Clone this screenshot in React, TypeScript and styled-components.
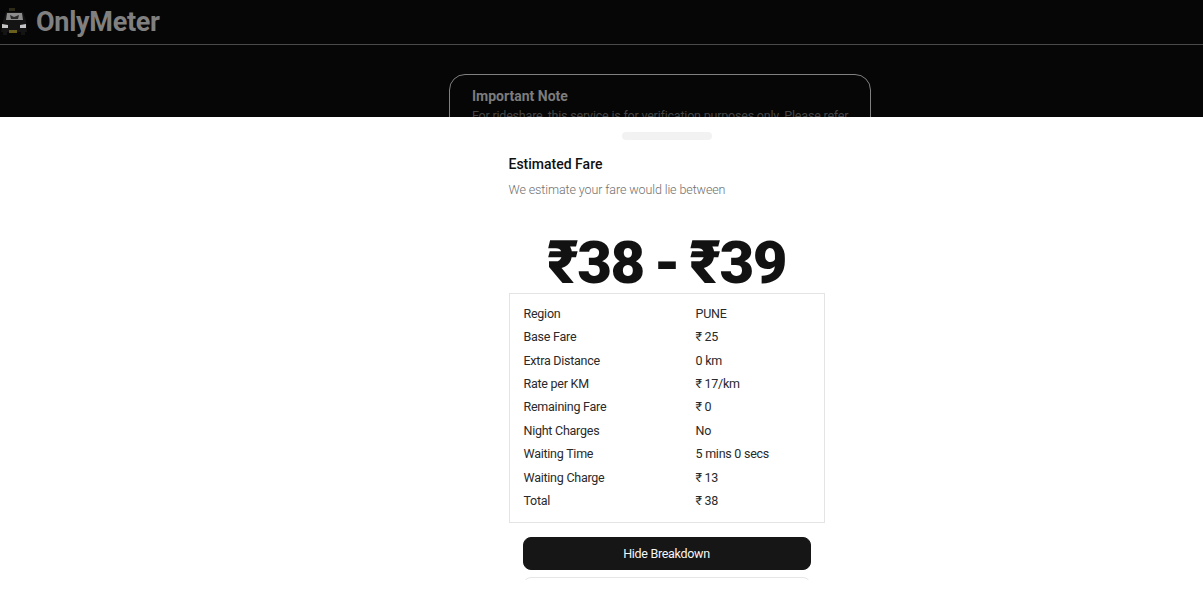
import React from 'react'
import styled, {createGlobalStyle} from 'styled-components'

const GlobalStyle = createGlobalStyle`
  html, body {
    margin: 0;
    padding: 0;
    height: 100%;
    background: #060606;
    overflow: hidden;
    font-family: "Roboto", "Noto Sans", "DejaVu Sans", sans-serif;
  }
`

const Page = styled.div`
  height: 611px;
  background: #060606;
  position: relative;
  overflow: hidden;
`

const Header = styled.header`
  height: 45px;
  box-sizing: border-box;
  border-bottom: 1px solid #4a4a4a;
  display: flex;
  align-items: center;
  gap: 8px;
`

const Brand = styled.div`
  font-size: 27px;
  font-weight: 700;
  color: #808080;
  letter-spacing: -0.3px;
`

const NoteCard = styled.section`
  width: 422px;
  box-sizing: border-box;
  margin: 29px 0 0 449px;
  padding: 12px 22px;
  border: 1px solid #808080;
  border-radius: 16px;
  height: 120px;
`

const NoteTitle = styled.div`
  font-size: 14px;
  font-weight: 700;
  color: #7c7c7c;
  line-height: 18px;
`

const NoteText = styled.div`
  font-size: 12.5px;
  letter-spacing: -0.2px;
  color: #454545;
  line-height: 20px;
  margin-top: 1px;
  white-space: nowrap;
`

const Sheet = styled.div`
  position: absolute;
  top: 117px;
  left: 0;
  right: 0;
  bottom: 0;
  background: #fff;
  padding-left: 130px;
  display: flex;
  flex-direction: column;
  align-items: center;
`

const Handle = styled.div`
  width: 90px;
  height: 8px;
  margin-top: 15px;
  border-radius: 4px;
  background: #f2f2f2;
  flex: none;
`

const Body = styled.div`
  width: 316px;
  display: flex;
  flex-direction: column;
  flex: none;
`

const Title = styled.h2`
  margin: 14px 0 0;
  font-size: 14px;
  line-height: 20px;
  font-weight: 500;
  color: #111;
`

const Subtitle = styled.p`
  margin: 6px 0 0;
  font-size: 12.5px;
  letter-spacing: -0.1px;
  line-height: 20px;
  font-weight: 300;
  color: #6f6f6f;
`

const FareRange = styled.div`
  margin-top: 23px;
  height: 70px;
  font-size: 60px;
  line-height: 80px;
  font-weight: 900;
  letter-spacing: -1.5px;
  word-spacing: -3.5px;
  color: #121212;
  text-align: center;
  white-space: nowrap;
`

const Breakdown = styled.div`
  box-sizing: border-box;
  height: 230px;
  border: 1px solid #e4e4e4;
  padding: 7.6px 14px 0;
  display: flex;
  flex-direction: column;
`

const Row = styled.div`
  height: 23.4px;
  display: grid;
  grid-template-columns: 172px 1fr;
  align-items: center;
  font-size: 12.5px;
  letter-spacing: -0.25px;
  color: #2a2a2a;
`

const Actions = styled.div`
  width: 288px;
  align-self: center;
  margin-top: 14px;
  display: flex;
  flex-direction: column;
  gap: 7px;
`

const Button = styled.button<{$primary?: boolean}>`
  width: 100%;
  height: 33px;
  flex: none;
  border-radius: 8px;
  border: 1px solid ${p => (p.$primary ? '#161616' : '#e6e6e6')};
  background: ${p => (p.$primary ? '#161616' : '#fff')};
  color: ${p => (p.$primary ? '#f5f5f5' : '#161616')};
  font-family: inherit;
  font-size: 12.5px;
  letter-spacing: -0.3px;
`

const BottomMask = styled.div`
  position: absolute;
  left: 0;
  right: 0;
  top: 580px;
  bottom: 0;
  background: #fff;
`

const CarLogo = () => (
  <svg width="28" height="40" viewBox="0 2 28 40">
    <rect x="9" y="8" width="6" height="3" fill="#2e2a18" />
    <path d="M3 21 L6 12 H23 L26 21 L27 32 H1 Z" fill="#141414" />
    <path d="M7 13 H22 L23 20 H6 Z" fill="#8d8d8d" />
    <path d="M10 15 L14 17 L19 15 L18 19 H11 Z" fill="#2a2a2a" />
    <path d="M2 24 L8 25 V28 H2 Z" fill="#c4c4c4" />
    <path d="M26 24 L20 25 V28 H26 Z" fill="#c4c4c4" />
    <rect x="9" y="30" width="8" height="3" fill="#6b5f1e" />
    <rect x="3" y="32" width="4" height="3" fill="#141414" />
    <rect x="21" y="32" width="4" height="3" fill="#141414" />
  </svg>
)

const rows = [
  ['Region', 'PUNE'],
  ['Base Fare', '₹ 25'],
  ['Extra Distance', '0 km'],
  ['Rate per KM', '₹ 17/km'],
  ['Remaining Fare', '₹ 0'],
  ['Night Charges', 'No'],
  ['Waiting Time', '5 mins 0 secs'],
  ['Waiting Charge', '₹ 13'],
  ['Total', '₹ 38'],
]

const App: React.FC = () => {
  return (
    <Page>
      <GlobalStyle />
      <Header>
        <CarLogo />
        <Brand>OnlyMeter</Brand>
      </Header>
      <NoteCard>
        <NoteTitle>Important Note</NoteTitle>
        <NoteText>For rideshare, this service is for verification purposes only. Please refer</NoteText>
      </NoteCard>
      <Sheet>
        <Handle />
        <Body>
          <Title>Estimated Fare</Title>
          <Subtitle>We estimate your fare would lie between</Subtitle>
          <FareRange>₹38 - ₹39</FareRange>
          <Breakdown>
            {rows.map(([label, value]) => (
              <Row key={label}>
                <span>{label}</span>
                <span>{value}</span>
              </Row>
            ))}
          </Breakdown>
          <Actions>
            <Button $primary>Hide Breakdown</Button>
            <Button>Close</Button>
          </Actions>
        </Body>
      </Sheet>
      <BottomMask />
    </Page>
  )
}

export default App
